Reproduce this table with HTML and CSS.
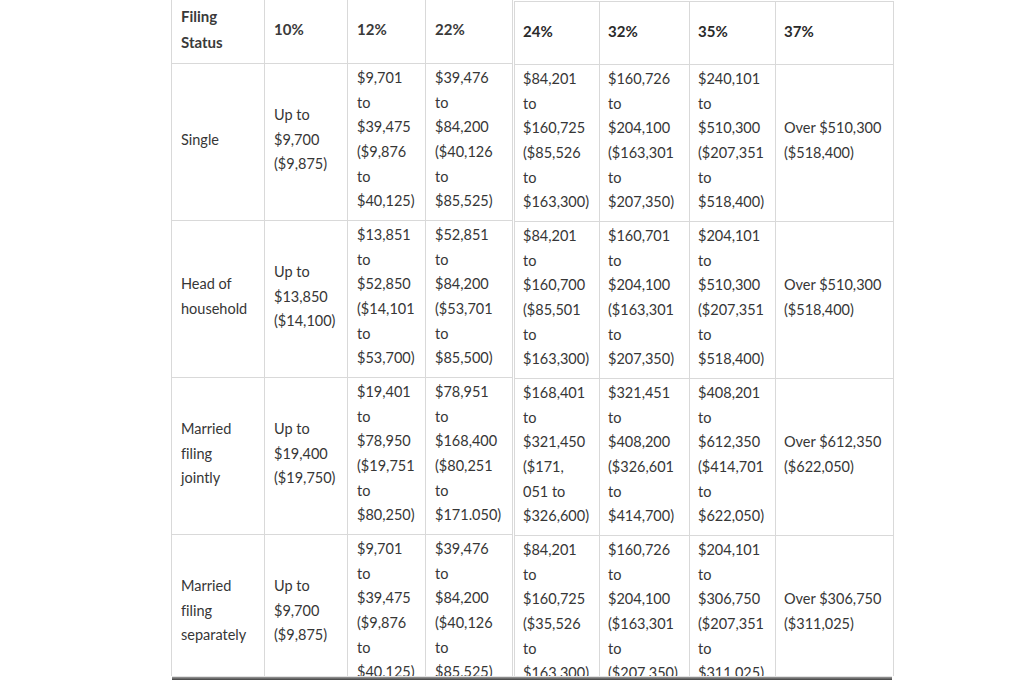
FILE: index.html
```html
<!DOCTYPE html>
<html lang="en">
<head>
<meta charset="utf-8">
<title>Tax brackets by filing status</title>
<link rel="stylesheet" href="styles.css">
</head>
<body>
<div class="page">
  <div class="viewport">
    <div class="sheet sheet-left">
      <div class="cell head"><span>Filing<br>Status</span></div>
      <div class="cell head rate">10%</div>
      <div class="cell head rate">12%</div>
      <div class="cell head rate">22%</div>

      <div class="cell">Single</div>
      <div class="cell">Up to<br>$9,700<br>($9,875)</div>
      <div class="cell">$9,701<br>to<br>$39,475<br>($9,876<br>to<br>$40,125)</div>
      <div class="cell">$39,476<br>to<br>$84,200<br>($40,126<br>to<br>$85,525)</div>

      <div class="cell">Head of<br>household</div>
      <div class="cell">Up to<br>$13,850<br>($14,100)</div>
      <div class="cell">$13,851<br>to<br>$52,850<br>($14,101<br>to<br>$53,700)</div>
      <div class="cell">$52,851<br>to<br>$84,200<br>($53,701<br>to<br>$85,500)</div>

      <div class="cell">Married<br>filing<br>jointly</div>
      <div class="cell">Up to<br>$19,400<br>($19,750)</div>
      <div class="cell">$19,401<br>to<br>$78,950<br>($19,751<br>to<br>$80,250)</div>
      <div class="cell">$78,951<br>to<br>$168,400<br>($80,251<br>to<br>$171.050)</div>

      <div class="cell">Married<br>filing<br>separately</div>
      <div class="cell">Up to<br>$9,700<br>($9,875)</div>
      <div class="cell">$9,701<br>to<br>$39,475<br>($9,876<br>to<br>$40,125)</div>
      <div class="cell">$39,476<br>to<br>$84,200<br>($40,126<br>to<br>$85,525)</div>
    </div>

    <div class="sheet sheet-right">
      <div class="cell head dark">24%</div>
      <div class="cell head dark">32%</div>
      <div class="cell head dark">35%</div>
      <div class="cell head dark">37%</div>

      <div class="cell">$84,201<br>to<br>$160,725<br>($85,526<br>to<br>$163,300)</div>
      <div class="cell">$160,726<br>to<br>$204,100<br>($163,301<br>to<br>$207,350)</div>
      <div class="cell">$240,101<br>to<br>$510,300<br>($207,351<br>to<br>$518,400)</div>
      <div class="cell">Over $510,300<br>($518,400)</div>

      <div class="cell">$84,201<br>to<br>$160,700<br>($85,501<br>to<br>$163,300)</div>
      <div class="cell">$160,701<br>to<br>$204,100<br>($163,301<br>to<br>$207,350)</div>
      <div class="cell">$204,101<br>to<br>$510,300<br>($207,351<br>to<br>$518,400)</div>
      <div class="cell">Over $510,300<br>($518,400)</div>

      <div class="cell">$168,401<br>to<br>$321,450<br>($171,<br>051 to<br>$326,600)</div>
      <div class="cell">$321,451<br>to<br>$408,200<br>($326,601<br>to<br>$414,700)</div>
      <div class="cell">$408,201<br>to<br>$612,350<br>($414,701<br>to<br>$622,050)</div>
      <div class="cell">Over $612,350<br>($622,050)</div>

      <div class="cell">$84,201<br>to<br>$160,725<br>($35,526<br>to<br>$163,300)</div>
      <div class="cell">$160,726<br>to<br>$204,100<br>($163,301<br>to<br>($207,350)</div>
      <div class="cell">$204,101<br>to<br>$306,750<br>($207,351<br>to<br>$311,025)</div>
      <div class="cell">Over $306,750<br>($311,025)</div>
    </div>
  </div>
  <div class="edge"></div>
</div>
</body>
</html>
```

FILE: styles.css
```css
html, body {
  margin: 0;
  padding: 0;
  background: #ffffff;
  overflow: hidden;
}

.page {
  width: 1024px;
  height: 680px;
  display: flex;
  flex-direction: column;
}

.viewport {
  height: 676px;
  overflow: hidden;
  display: flex;
  align-items: flex-start;
  padding-left: 171px;
  font-family: Lato, "Open Sans", "Liberation Sans", sans-serif;
  font-size: 14.5px;
  line-height: 24.6px;
  color: #363636;
  font-variant-ligatures: none;
}

.sheet {
  display: grid;
  border-left: 1px solid #d9d9d9;
}

.sheet-left {
  grid-template-columns: 93px 83px 78px 87px;
  grid-template-rows: 64px 157px 157px 157px 157px;
}

.sheet-right {
  margin-left: 1px;
  margin-top: 1px;
  border-top: 1px solid #d9d9d9;
  grid-template-columns: 85px 90px 86px 118px;
  grid-template-rows: 63px 157px 157px 157px 157px;
}

.cell {
  box-sizing: border-box;
  border-right: 1px solid #d9d9d9;
  border-bottom: 1px solid #d9d9d9;
  display: flex;
  align-items: center;
  padding: 0 6px 4px 9px;
  white-space: nowrap;
}

.sheet-right .cell {
  padding-left: 8px;
}

.head {
  font-weight: 700;
  font-size: 15px;
  line-height: 26px;
  color: #3a3a3a;
  padding-bottom: 5px;
}

.head.dark {
  color: #2a2a2a;
}

.edge {
  height: 4px;
  margin-left: 172px;
  width: 720px;
  box-sizing: border-box;
  border-top: 1px solid #e3e3e3;
  background: linear-gradient(#9a9a9a, #3f3f3f);
}
```
